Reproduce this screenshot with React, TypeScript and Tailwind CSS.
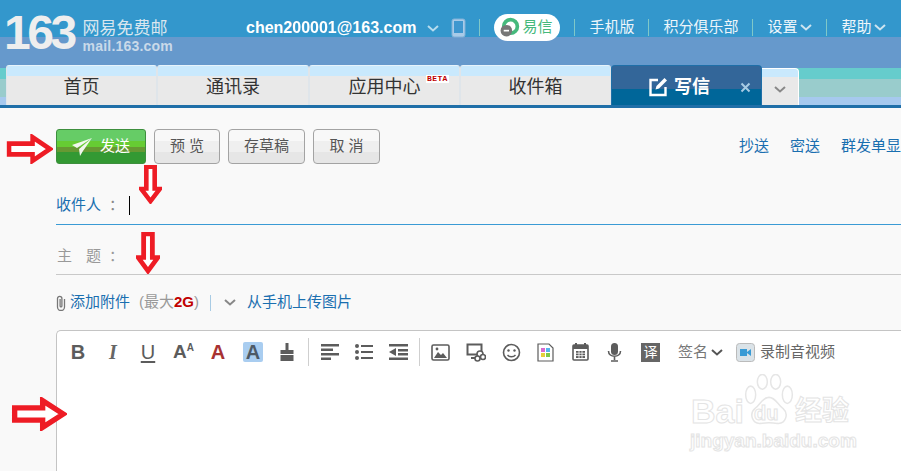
const cjk = "font-['Liberation_Sans','Noto_Sans_CJK_SC',sans-serif]";

function Chevron({ className = "" }: { className?: string }) {
  return (
    <svg width="12" height="7" viewBox="0 0 12 7" className={className}>
      <path d="M1 1l5 4.5L11 1" fill="none" stroke="currentColor" strokeWidth="2" />
    </svg>
  );
}

function RedArrow({ dir, className }: { dir: "right" | "down"; className: string }) {
  const right = "M3 9h23V3l17 11-17 11v-6H3z";
  const down = "M7 2h8v23h5L11 38 2 25h5z";
  return (
    <svg viewBox={dir === "right" ? "0 0 46 28" : "0 0 22 41"} className={className} preserveAspectRatio="none">
      <path d={dir === "right" ? right : down} fill="#fff" stroke="#ee1c25" strokeWidth="4.4" strokeLinejoin="miter" />
    </svg>
  );
}

function NavSep() {
  return <span className="h-[17px] w-px bg-[#7fc8c8]" />;
}

const tabs = [
  { label: "首页", w: "w-[151px]" },
  { label: "通讯录", w: "w-[152px]" },
  { label: "应用中心", w: "w-[151px]", beta: true },
  { label: "收件箱", w: "w-[151px]" },
];

function GrayBtn({ label, w }: { label: string; w: string }) {
  return (
    <button
      type="button"
      className={`${w} h-[35px] rounded-[4px] border border-[#a3a3a3] bg-[linear-gradient(#f8f8f8_0,#f8f8f8_11px,#efefef_11px,#efefef_22px,#e6e6e6_22px)] text-[15px] text-[#555]`}
    >
      {label}
    </button>
  );
}

function ToolText({ children, className = "" }: { children: React.ReactNode; className?: string }) {
  return <span className={`flex h-[20px] w-[20px] items-center justify-center font-['Liberation_Sans',sans-serif] text-[20px] leading-none ${className}`}>{children}</span>;
}

function Toolbar() {
  const c = "#5c5c5c";
  return (
    <div className="flex h-[42px] items-center pl-[11px] text-[#5c5c5c]">
      <div className="flex items-center gap-[15px]">
        <ToolText className="font-bold">B</ToolText>
        <ToolText className="font-['Liberation_Serif',serif] font-bold italic text-[#666]">I</ToolText>
        <ToolText className="text-[19px] underline underline-offset-2">U</ToolText>
        <span className="flex h-[20px] w-[20px] items-start font-['Liberation_Sans',sans-serif] font-bold leading-none">
          <span className="text-[19px]">A</span>
          <span className="mt-[1px] text-[10px]">A</span>
        </span>
        <ToolText className="font-bold text-[#a83232]">A</ToolText>
        <ToolText className="rounded-[2px] bg-[#a9cdf0] font-bold text-[#4d5a66]">A</ToolText>
        <svg width="18" height="20" viewBox="0 0 18 20">
          <path d="M7.5 1h3v7h5v4h-13V8h5zM2.5 13h13v6h-13z" fill={c} />
        </svg>
      </div>
      <span className="ml-[12px] mr-[11px] h-[28px] w-px bg-[#cfcfcf]" />
      <div className="flex items-center gap-[14px]">
        <svg width="20" height="18" viewBox="0 0 20 18">
          <path d="M1 1h18v2.4H1zM1 5.5h12v2.4H1zM1 10h18v2.4H1zM1 14.5h10v2.4H1z" fill={c} />
        </svg>
        <svg width="20" height="18" viewBox="0 0 20 18">
          <path d="M7 2h12v2H7zM7 8h12v2H7zM7 14h12v2H7z" fill={c} />
          <circle cx="3" cy="3" r="2" fill={c} />
          <circle cx="3" cy="9" r="2" fill={c} />
          <circle cx="3" cy="15" r="2" fill={c} />
        </svg>
        <svg width="20" height="18" viewBox="0 0 20 18">
          <path d="M1 1h19v2.4H1zM10 6h10v2.4H10zM10 10h10v2.4H10zM1 14.5h19v2.4H1zM8 5v8L1 9z" fill={c} />
        </svg>
      </div>
      <span className="ml-[11px] mr-[11px] h-[28px] w-px bg-[#cfcfcf]" />
      <div className="flex items-center gap-[16px]">
        <svg width="19" height="17" viewBox="0 0 19 17">
          <rect x="1" y="1" width="17" height="15" rx="1.5" fill="#fff" stroke={c} strokeWidth="1.6" />
          <path d="M3 14l4-6 3 3 2-2 4 5z" fill={c} />
          <circle cx="6" cy="5" r="1.4" fill={c} />
        </svg>
        <svg width="20" height="19" viewBox="0 0 20 19">
          <path d="M1.5 1.5h14v10h-14zM5 15h5" fill="none" stroke={c} strokeWidth="2" />
          <circle cx="14" cy="11" r="3" fill="#fff" stroke={c} strokeWidth="1.6" />
          <circle cx="11.5" cy="15.5" r="2.5" fill="#fff" stroke={c} strokeWidth="1.6" />
          <circle cx="17" cy="14" r="2.5" fill="#fff" stroke={c} strokeWidth="1.6" />
        </svg>
        <svg width="19" height="19" viewBox="0 0 19 19">
          <circle cx="9.5" cy="9.5" r="8" fill="#fff" stroke={c} strokeWidth="1.6" />
          <circle cx="6.5" cy="7.5" r="1.2" fill={c} />
          <circle cx="12.5" cy="7.5" r="1.2" fill={c} />
          <path d="M5.5 12c2 2.4 6 2.4 8 0" fill="none" stroke={c} strokeWidth="1.4" />
        </svg>
        <svg width="17" height="19" viewBox="0 0 17 19">
          <path d="M1 1h11l4 4v13H1z" fill="#fff" stroke={c} strokeWidth="1.2" />
          <rect x="4" y="5" width="4" height="4" fill="#d66ad0" />
          <rect x="9" y="5" width="4" height="4" fill="#55b5ee" />
          <rect x="4" y="10" width="4" height="4" fill="#e6cf3a" />
          <rect x="9" y="10" width="4" height="4" fill="#7cc84a" />
        </svg>
        <svg width="17" height="18" viewBox="0 0 17 18" className="ml-[2px]">
          <rect x="1" y="2" width="15" height="15" rx="1" fill="#fff" stroke={c} strokeWidth="1.6" />
          <path d="M1 2h15v4H1zM3 0h2v3H3zM12 0h2v3h-2z" fill={c} />
          <path d="M4 8h9v7H4z" fill={c} />
          <path d="M4 10.2h9M4 12.6h9M7 8v7M10 8v7" stroke="#fff" strokeWidth="0.8" />
        </svg>
        <svg width="15" height="19" viewBox="0 0 15 19" className="ml-[2px]">
          <rect x="4" y="0" width="7" height="12" rx="3.5" fill={c} />
          <path d="M1.5 8c0 7 12 7 12 0M7.5 14v3M4 18h7" fill="none" stroke={c} strokeWidth="1.6" />
        </svg>
        <span className={`ml-[3px] flex h-[19px] w-[19px] items-center justify-center bg-[#666] text-[14px] leading-none text-white ${cjk}`}>译</span>
      </div>
      <span className={`ml-[18px] flex items-center gap-[3px] text-[15px] text-[#777] ${cjk}`}>
        签名
        <Chevron className="text-[#555]" />
      </span>
      <svg width="19" height="19" viewBox="0 0 19 19" className="ml-[13px]">
        <rect x="0.5" y="0.5" width="18" height="18" rx="3" fill="#dbe3e8" stroke="#bbb" />
        <path d="M4 6h7v7H4zM11 9l4-3v7l-4-3z" fill="#3a9bd5" />
      </svg>
      <span className={`ml-[5px] text-[15px] text-[#666] ${cjk}`}>录制音视频</span>
    </div>
  );
}

export default function App() {
  return (
    <div className={`relative h-[471px] w-[901px] overflow-hidden bg-[#f9f9f9] ${cjk}`}>
      {/* top bar */}
      <div className="flex h-[65px] items-start bg-[linear-gradient(#3397cc_0,#3397cc_37px,#6699cc_37px)]">
        <div className="flex w-[246px] items-start pl-[4px] pt-[12px]">
          <span className="font-['Liberation_Sans',sans-serif] text-[48px] font-bold leading-[42px] tracking-[-3.5px] text-[#eeeeee]">163</span>
          <div className="ml-[9px] mt-[8px] flex flex-col">
            <span className="text-[17px] leading-[18px] text-[#d9e6ef]">网易免费邮</span>
            <span className="font-['Liberation_Sans',sans-serif] text-[14px] font-bold leading-[17px] tracking-[0.2px] text-[#c9d9e9]">mail.163.com</span>
          </div>
        </div>
        <div className="flex h-[37px] flex-1 items-center pt-[18px] text-white">
          <span className="font-['Liberation_Sans',sans-serif] text-[16px] font-bold">
            chen2<span className="text-white blur-[0.7px]">00001</span>@163.com
          </span>
          <Chevron className="ml-[11px] mt-[2px] text-[#b6dcee]" />
          <svg width="15" height="20" viewBox="0 0 15 20" className="ml-[12px]">
            <rect x="1" y="1" width="13" height="18" rx="2" fill="#a9cbe8" stroke="#7fb0d8" />
            <rect x="3" y="3" width="9" height="12" fill="#3f97cf" />
          </svg>
          <span className="ml-[13px] h-[17px] w-px bg-[#7fc8c8]" />
          <span className="ml-[14px] flex h-[27px] w-[66px] items-center rounded-[14px] bg-white pl-[5px] text-[15px] text-[#45b97c]">
            <svg width="21" height="21" viewBox="0 0 20 20">
              <circle cx="11" cy="9" r="6.5" fill="none" stroke="#45b97c" strokeWidth="3.5" />
              <circle cx="7" cy="13" r="5.5" fill="#777" />
              <path d="M4.5 13h5" stroke="#fff" strokeWidth="1.6" />
            </svg>
            <span className="ml-[2px]">易信</span>
          </span>
          <span className="ml-[14px] h-[17px] w-px bg-[#7fc8c8]" />
          <div className="ml-[14px] flex items-center gap-[14px] text-[15px] text-[#eef6fb]">
            <span>手机版</span>
            <NavSep />
            <span>积分俱乐部</span>
            <NavSep />
            <span className="flex items-center gap-[3px]">
              设置
              <Chevron className="text-[#cde4f0]" />
            </span>
            <NavSep />
            <span className="flex items-center gap-[3px]">
              帮助
              <Chevron className="text-[#cde4f0]" />
            </span>
          </div>
        </div>
      </div>

      {/* tab strip */}
      <div className="flex h-[43px] border-b-[3px] border-[#1f6fa8] bg-[linear-gradient(#6699cc_0,#6699cc_3px,#66cccc_3px,#66cccc_14px,#99cccc_14px,#99cccc_32px,#a6c9ee_32px)] pl-[6px]">
        {tabs.map((t) => (
          <div
            key={t.label}
            className={`${t.w} relative flex items-end justify-center rounded-t-[3px] border-x border-t border-[#dfe5ea] border-t-[#e6f3fb] bg-[linear-gradient(#c9e9fd_0,#c9e9fd_10px,#e9e9e9_10px)] pb-[6px] text-[18px] leading-[24px] text-[#333]`}
          >
            <span>{t.label}</span>
            {t.beta && (
              <span className="absolute left-[116px] top-[9px] bg-white px-px font-['Liberation_Mono',monospace] text-[8px] font-bold leading-[8px] tracking-[0.4px] text-[#c00000]">BETA</span>
            )}
          </div>
        ))}
        <div className="flex w-[151px] items-end rounded-t-[4px] border border-b-0 border-[#1f6fa8] bg-[linear-gradient(#336699_0,#336699_23px,#006699_23px)] pb-[6px] pl-[36px] text-[18px] font-bold leading-[24px] text-white">
          <svg width="20" height="20" viewBox="0 0 20 20" className="mb-[2px] mr-[6px]">
            <path d="M10 3H2.5v15h15v-8" fill="none" stroke="#fff" strokeWidth="2.4" />
            <path d="M7.5 12.5l1-3.5 8-8 2.5 2.5-8 8z" fill="#fff" />
          </svg>
          <span>写信</span>
          <svg width="11" height="11" viewBox="0 0 11 11" className="mb-[6px] ml-[30px]">
            <path d="M1.5 1.5l8 8M9.5 1.5l-8 8" stroke="#a8cbe4" strokeWidth="2" />
          </svg>
        </div>
        <div className="mt-[3px] flex w-[37px] items-center justify-center rounded-tr-[4px] border-r border-t border-white bg-[linear-gradient(#c9e9fd_0,#c9e9fd_8px,#e9e9e9_8px)] pt-[5px] text-[#888]">
          <Chevron />
        </div>
      </div>

      {/* compose actions */}
      <div className="flex h-[55px] items-start justify-between pl-[56px] pt-[21px]">
        <div className="flex gap-[8px]">
          <button
            type="button"
            className="flex h-[35px] w-[90px] items-center justify-center rounded-[3px] border border-[#3d8f3d] bg-[linear-gradient(#66cc66_0,#66cc66_11px,#66cc33_11px,#66cc33_17px,#669933_17px,#669933_22px,#339933_22px)] text-[15px] text-white"
          >
            <svg width="21" height="18" viewBox="0 0 21 18" className="mr-[7px]">
              <path d="M20 0L0 7l5 3zM20 0L7 11l1 7 3-5z" fill="#f1f7ee" />
            </svg>
            发送
          </button>
          <GrayBtn label="预 览" w="w-[66px]" />
          <GrayBtn label="存草稿" w="w-[77px]" />
          <GrayBtn label="取 消" w="w-[67px]" />
        </div>
        <div className="flex gap-[21px] whitespace-nowrap pt-[6px] text-[15px] text-[#1a6fb0]">
          <span>抄送</span>
          <span>密送</span>
          <span>群发单显</span>
        </div>
      </div>

      {/* recipient + subject */}
      <div className="ml-[56px]">
        <div className="mt-[8px] flex h-[54px] items-end border-b border-[#3a9bd5] pb-[8px] text-[15px] leading-[22px]">
          <span className="text-[#1a6fb0]">收件人</span>
          <span className="ml-[8px] text-[#888]">：</span>
          <span className="mb-[1px] ml-[5px] h-[19px] w-px bg-black" />
        </div>
        <div className="flex h-[50px] items-center border-b border-[#c9c9c9] pt-[14px] text-[15px] text-[#999]">
          <span className="flex w-[45px] justify-between pl-px">
            <span>主</span>
            <span>题</span>
          </span>
          <span className="ml-[8px]">：</span>
        </div>
        <div className="flex h-[55px] items-center text-[15px]">
          <svg width="10" height="16" viewBox="0 0 10 16" className="mr-[4px]">
            <path d="M8.5 4v8a3.5 3.5 0 0 1-7 0V3.5a2.2 2.2 0 0 1 4.4 0V11a.9.9 0 0 1-1.8 0V4" fill="none" stroke="#777" strokeWidth="1.3" />
          </svg>
          <span className="text-[#1a6fb0]">添加附件</span>
          <span className="ml-[9px] text-[#999]">(最大</span>
          <span className="font-['Liberation_Sans',sans-serif] font-bold text-[#c00000]">2G</span>
          <span className="text-[#999]">)</span>
          <span className="ml-[11px] h-[16px] w-px bg-[#a8cbe4]" />
          <Chevron className="ml-[13px] text-[#888]" />
          <span className="ml-[11px] text-[#1a6fb0]">从手机上传图片</span>
        </div>
      </div>

      {/* editor */}
      <div className="ml-[56px] h-[200px] rounded-tl-[5px] border-l border-t border-[#c4c4c4] bg-white">
        <Toolbar />
      </div>

      {/* watermark */}
      <div className="absolute left-[690px] top-[374px] h-[78px] w-[165px]">
        <svg width="50" height="52" viewBox="0 0 60 60" className="absolute left-[54px] top-0" preserveAspectRatio="none">
          <g fill="none" stroke="#e6e6e6" strokeWidth="1.8">
            <ellipse cx="8" cy="24" rx="6" ry="10" />
            <ellipse cx="22" cy="9" rx="6" ry="8.5" />
            <ellipse cx="38" cy="9" rx="6" ry="8.5" />
            <ellipse cx="52" cy="24" rx="6" ry="10" />
            <path d="M30 27c-8 0-10 8-17 13-7 6-3 18 7 17 7-1 13-1 20 0 10 1 14-11 7-17-7-5-9-13-17-13z" />
          </g>
        </svg>
        <span className="absolute left-[1px] top-[20px] font-['Liberation_Sans',sans-serif] text-[34px] font-bold leading-[34px] text-transparent [-webkit-text-stroke:1px_#e4e4e4]">Bai</span>
        <span className="absolute left-[64px] top-[29px] font-['Liberation_Sans',sans-serif] text-[20px] font-bold leading-[20px] text-transparent [-webkit-text-stroke:1px_#e4e4e4]">du</span>
        <span className="absolute left-[105px] top-[22px] text-[27px] font-bold leading-[30px] text-transparent [-webkit-text-stroke:1px_#e4e4e4]">经验</span>
        <span className="absolute left-0 top-[56px] whitespace-nowrap font-['Liberation_Sans',sans-serif] text-[19px] font-bold leading-[22px] text-transparent [-webkit-text-stroke:1px_#e4e4e4]">jingyan.baidu.com</span>
      </div>

      {/* red annotation arrows */}
      <RedArrow dir="right" className="absolute left-[6px] top-[134px] h-[30px] w-[47px]" />
      <RedArrow dir="down" className="absolute left-[139px] top-[165px] h-[39px] w-[23px]" />
      <RedArrow dir="down" className="absolute left-[136px] top-[232px] h-[42px] w-[24px]" />
      <RedArrow dir="right" className="absolute left-[11px] top-[397px] h-[34px] w-[56px]" />
    </div>
  );
}
